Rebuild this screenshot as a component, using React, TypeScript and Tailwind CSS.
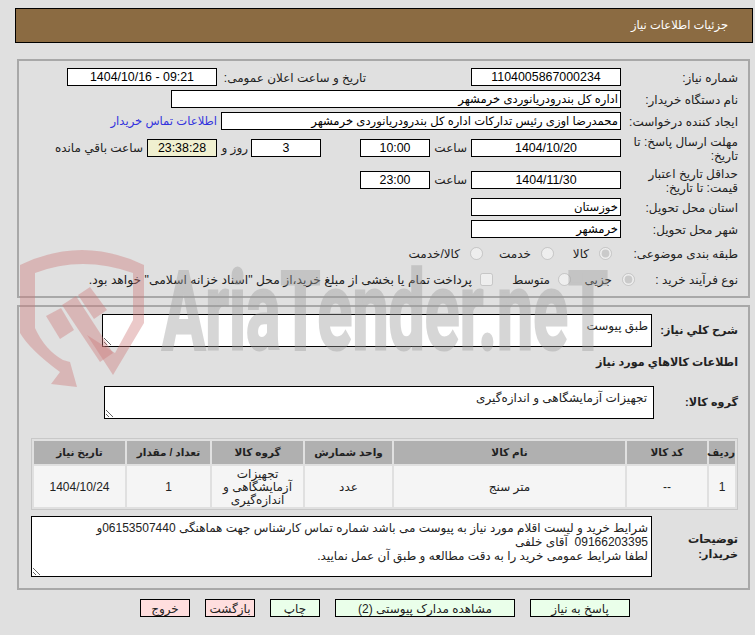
const font = "[font-family:'Liberation_Sans','DejaVu_Sans',sans-serif]";

function Box({ value, width, center, className = "" }: { value: string; width: string; center?: boolean; className?: string }) {
  return (
    <input
      readOnly
      value={value}
      dir={center ? "ltr" : "rtl"}
      className={`h-[18px] border border-black bg-white px-[2px] text-black outline-none ${center ? "text-center text-[12.4px]" : "text-right text-[11.6px]"} ${width} ${className}`}
    />
  );
}

function Row({ label, h = "h-[18px]", children }: { label: string; h?: string; children?: React.ReactNode }) {
  return (
    <div className={`mb-[4px] flex items-center ${h}`}>
      <div className="w-[117px] shrink-0 pt-[1px] text-[12px] leading-[14px] text-[#222]">{label}</div>
      {children}
    </div>
  );
}

function Choice({ label, checked, w, gap = "mr-[10px]" }: { label: string; checked?: boolean; w: string; gap?: string }) {
  return (
    <label className={`flex items-center ${w}`}>
      <input type="radio" disabled checked={checked} readOnly className="m-0 h-[13px] w-[13px]" />
      <span className={`mt-[2px] text-[12px] text-[#222] ${gap}`}>{label}</span>
    </label>
  );
}

function Note({ value, className }: { value: string; className: string }) {
  return (
    <textarea
      readOnly
      defaultValue={value}
      className={`block border border-black bg-white px-[3px] pt-[4px] text-[12px] leading-[14px] text-[#222] outline-none ${className}`}
    />
  );
}

function Btn({ label, tone, w }: { label: string; tone: "green" | "pink"; w: string }) {
  return (
    <button className={`h-[18px] border border-black text-[12px] text-[#222] ${tone === "green" ? "bg-[#eaffea]" : "bg-[#ffdede]"} ${w}`}>
      {label}
    </button>
  );
}

const cols = ["w-[26px]", "w-[80px]", "w-[231px]", "w-[87px]", "w-[91px]", "w-[83px]", "w-[91px]"];
const heads = ["ردیف", "کد کالا", "نام کالا", "واحد شمارش", "گروه کالا", "تعداد / مقدار", "تاریخ نیاز"];
const cells = ["1", "--", "متر سنج", "عدد", "تجهیزات آزمایشگاهی و اندازه‌گیری", "1", "1404/10/24"];

function Watermark() {
  return (
    <svg className="pointer-events-none absolute left-0 top-0 [direction:ltr]" width="755" height="635" viewBox="0 0 755 635">
      <g fill="#ce7979" fillOpacity="0.4">
        <path d="M20 265 Q82 235 144 265 L144 323 L113 375 L87 335 L115 353 L133 320 L133 273 Q82 255 35 273 L35 328 Q45 350 63 360 L70 362 L77 387 L51 384 L60 372 Q30 350 20 333 Z" />
        <path d="M46 316 L61 308 L74 330 L60 339 Z" />
        <path d="M62 305 L76 296 L113 353 L100 362 Z" />
        <path d="M78 295 L90 287 L107 310 L94 319 Z" />
      </g>
      <text
        x="162"
        y="349"
        textLength="446"
        lengthAdjust="spacingAndGlyphs"
        fontFamily="Roboto, sans-serif"
        fontWeight="700"
        fontSize="110"
        fill="#9b9b9b"
        stroke="#9b9b9b"
        strokeWidth="3"
        opacity="0.4"
        className="[direction:ltr]"
      >
        AriaTender.neT
      </text>
    </svg>
  );
}

export default function App() {
  return (
    <div dir="rtl" className={`relative h-[635px] w-[755px] overflow-hidden bg-[#e0e0e0] pt-[8px] ${font}`}>
      <div className="mr-[2px] flex h-[35px] w-[738px] items-center border border-black bg-[#8b6b42] pr-[24px] pt-[1px] text-[11.5px] text-white">
        جزئیات اطلاعات نیاز
      </div>

      <div className="mr-[5px] mt-[16px] h-[239px] w-[733px] border-2 border-[#a8a8a8] pr-[10px] pt-[7px]">
        <Row label="شماره نیاز:">
          <Box value="1104005867000234" width="w-[150px]" center />
          <div className="w-[105px] shrink-0" />
          <div className="w-[149px] shrink-0 pt-[1px] text-[12px] text-[#222]">تاریخ و ساعت اعلان عمومی:</div>
          <Box value="1404/10/16 - 09:21" width="w-[150px]" center />
        </Row>
        <Row label="نام دستگاه خریدار:">
          <Box value="اداره کل بندرودریانوردی خرمشهر" width="w-[450px]" />
        </Row>
        <Row label="ایجاد کننده درخواست:">
          <Box value="محمدرضا اوزی رئیس تدارکات اداره کل بندرودریانوردی خرمشهر" width="w-[400px]" />
          <a className="mr-[4px] text-[11.6px] text-[#3333dd]">اطلاعات تماس خریدار</a>
        </Row>
        <Row label="مهلت ارسال پاسخ: تا تاریخ:" h="h-[28px]">
          <Box value="1404/10/20" width="w-[150px]" center />
          <span className="mr-[4px] w-[37px] text-[12px] text-[#222]">ساعت</span>
          <Box value="10:00" width="w-[70px]" center />
          <div className="w-[39px] shrink-0" />
          <Box value="3" width="w-[70px]" center />
          <span className="mr-[3px] w-[31px] text-[12px] text-[#222]">روز و</span>
          <Box value="23:38:28" width="w-[70px]" center className="!bg-[#f0f0d0]" />
          <span className="mr-[4px] text-[12px] text-[#222]">ساعت باقي مانده</span>
        </Row>
        <Row label="حداقل تاریخ اعتبار قیمت: تا تاریخ:" h="h-[28px]">
          <Box value="1404/11/30" width="w-[150px]" center />
          <span className="mr-[4px] w-[37px] text-[12px] text-[#222]">ساعت</span>
          <Box value="23:00" width="w-[70px]" center />
        </Row>
        <Row label="استان محل تحویل:">
          <Box value="خوزستان" width="w-[150px]" />
        </Row>
        <Row label="شهر محل تحویل:">
          <Box value="خرمشهر" width="w-[150px]" />
        </Row>
        <Row label="طبقه بندی موضوعی:" h="h-[22px]">
          <div className="mr-[9px] flex">
            <Choice label="کالا" checked w="w-[58px]" />
            <Choice label="خدمت" w="w-[71px]" />
            <Choice label="کالا/خدمت" w="w-[80px]" />
          </div>
        </Row>
        <Row label="نوع فرآیند خرید :" h="h-[22px]">
          <div className="-mr-[14px] flex">
            <Choice label="جزیی" checked w="w-[64px]" />
            <Choice label="متوسط" w="w-[78px]" gap="mr-[8px]" />
            <label className="flex items-center">
              <input type="checkbox" disabled className="m-0 h-[13px] w-[13px]" />
              <span className="mr-[8px] mt-[2px] whitespace-nowrap text-[12.3px] text-[#222]">
                پرداخت تمام یا بخشی از مبلغ خرید،از محل "اسناد خزانه اسلامی" خواهد بود.
              </span>
            </label>
          </div>
        </Row>
      </div>

      <div className="mr-[5px] mt-[7px] h-[285px] w-[733px] border-2 border-[#a8a8a8] pr-[10px] pt-[7px]">
        <div className="flex h-[33px] items-center">
          <div className="w-[86px] shrink-0 whitespace-nowrap text-[11.2px] font-bold text-[#222]">شرح کلي نیاز:</div>
          <Note value="طبق پیوست" className="h-[33px] w-[550px]" />
        </div>
        <div className="mt-[6px] h-[18px] text-[11.2px] font-bold leading-[18px] text-[#222]">اطلاعات کالاهاي مورد نیاز</div>
        <div className="mt-[15px] flex h-[33px] items-center">
          <div className="w-[84px] shrink-0 text-[11.2px] font-bold text-[#222]">گروه کالا:</div>
          <Note value="تجهیزات آزمایشگاهی و اندازه‌گیری" className="h-[33px] w-[550px] !pr-[6px]" />
        </div>
        <table className="mt-[19px] w-[707px] table-fixed border-separate border-spacing-[2px] border border-[#c8c8c8] text-[12px] text-[#222]">
          <thead>
            <tr>
              {heads.map((h, i) => (
                <th key={h} className={`h-[23px] bg-[#b0b0b0] p-0 pt-[1px] text-[10.5px] font-bold ${cols[i]}`}>
                  {h}
                </th>
              ))}
            </tr>
          </thead>
          <tbody>
            <tr>
              {cells.map((c, i) => (
                <td key={i} className={`h-[41px] bg-[#f5f5f5] p-0 pt-[2px] text-center leading-[13px] ${cols[i]}`}>
                  {c}
                </td>
              ))}
            </tr>
          </tbody>
        </table>
        <div className="mt-[6px] flex h-[61px] items-center">
          <div className="w-[86px] shrink-0 text-[11.2px] font-bold leading-[15px] text-[#222]">توضیحات خریدار:</div>
          <Note
            value={"شرایط خرید و لیست اقلام مورد نیاز به پیوست می باشد شماره تماس کارشناس جهت هماهنگی 06153507440و\n09166203395  آقای خلفی\nلطفا شرایط عمومی خرید را به دقت مطالعه و طبق آن عمل نمایید."}
            className="h-[61px] w-[621px]"
          />
        </div>
      </div>

      <div className="mr-[125px] mt-[9px] flex gap-[15px]">
        <Btn label="پاسخ به نیاز" tone="green" w="w-[100px]" />
        <Btn label="مشاهده مدارک پیوستی (2)" tone="green" w="w-[180px]" />
        <Btn label="چاپ" tone="green" w="w-[50px]" />
        <Btn label="بازگشت" tone="pink" w="w-[50px]" />
        <Btn label="خروج" tone="pink" w="w-[50px]" />
      </div>

      <Watermark />
    </div>
  );
}
